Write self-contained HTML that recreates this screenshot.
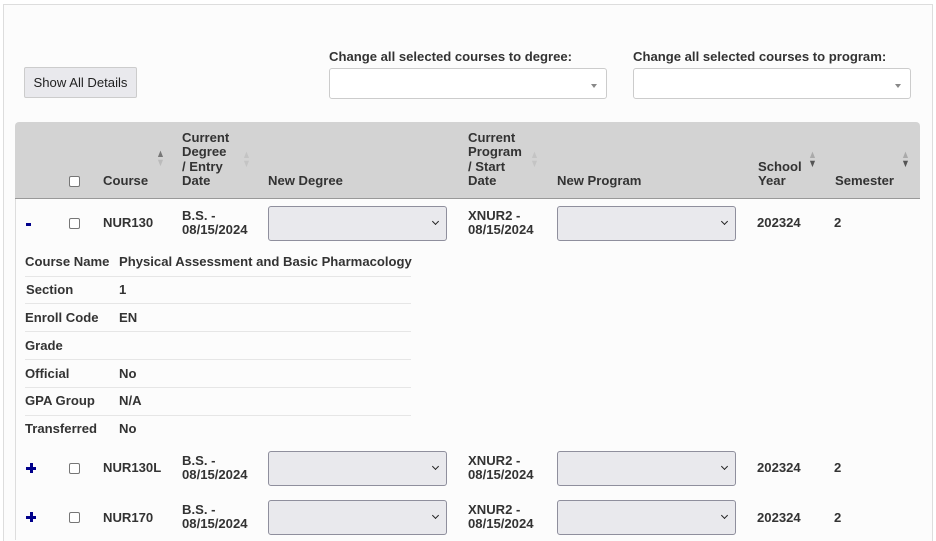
<!DOCTYPE html>
<html><head><style>
html,body{margin:0;background:#fff;width:936px;height:540px;overflow:hidden;font-family:"Liberation Sans",Arial,sans-serif;color:#333;}
.frame{position:absolute;left:3px;top:4px;width:928px;height:536px;border:1px solid #ddd;border-bottom:none;background:#fcfcfc;}
.a{position:absolute;}
.b{font-weight:bold;font-size:13.1px;line-height:14.4px;}
.btn{position:absolute;left:24px;top:67px;width:113px;height:31px;background:#e9e9ed;border:1px solid #ccc;border-radius:2px;font-size:13.1px;line-height:29px;text-align:center;color:#222;box-sizing:border-box;}
.sel2{position:absolute;height:31px;background:#fff;border:1px solid #ccc;border-radius:3px;box-sizing:border-box;}
.sel2:after{content:"";position:absolute;right:9px;top:15px;border-left:3px solid transparent;border-right:3px solid transparent;border-top:4px solid #888;}
.hdr{position:absolute;left:15px;top:122px;width:905px;height:77px;background:#d3d3d3;border-radius:4px 4px 0 0;border-bottom:1px solid #999;box-sizing:border-box;}
.vl{position:absolute;left:15px;top:199px;width:1px;height:341px;background:#ddd;}
.cb{position:absolute;width:11px;height:11px;border:1px solid #767676;border-radius:2px;background:#fff;box-sizing:border-box;}
.sel{position:absolute;width:179px;height:35px;background:#e9e9ed;border:1px solid #8f8f9d;border-radius:3px;box-sizing:border-box;}
.sel:after{content:"";position:absolute;right:8px;top:12px;width:4px;height:4px;border-right:1.5px solid #222;border-bottom:1.5px solid #222;transform:rotate(45deg);}
.dl{position:absolute;left:25px;width:386px;height:28px;border-top:1px solid #e6e6e6;}
.arr{position:absolute;font-size:11px;line-height:9px;color:#aaa;transform:scaleX(0.8);}
.plus{position:absolute;left:26px;width:10px;height:10px;}
.plus:before{content:"";position:absolute;left:0;top:4px;width:10px;height:2.5px;background:#00008b;}
.plus:after{content:"";position:absolute;left:4px;top:0;width:2.5px;height:10px;background:#00008b;}
</style></head><body>
<div class="frame"></div>
<div class="btn">Show All Details</div>
<div class="a b" style="left:329px;top:50px">Change all selected courses to degree:</div>
<div class="a b" style="left:633px;top:50px">Change all selected courses to program:</div>
<div class="sel2" style="left:329px;top:68px;width:278px"></div>
<div class="sel2" style="left:633px;top:68px;width:278px"></div>
<div class="hdr"></div>
<div class="vl"></div>
<div class="cb" style="left:69px;top:176px"></div>
<div class="a b" style="left:103px;top:174px">Course</div>
<div class="arr" style="left:155px;top:150px;color:#777">▲<br><span style="color:#bbb">▼</span></div>
<div class="a b" style="left:182px;top:131px">Current<br>Degree<br>/ Entry<br>Date</div>
<div class="arr" style="left:241px;top:151px;color:#c4c4c4">▲<br>▼</div>
<div class="a b" style="left:268px;top:174px">New Degree</div>
<div class="a b" style="left:468px;top:131px">Current<br>Program<br>/ Start<br>Date</div>
<div class="arr" style="left:529px;top:151px;color:#c4c4c4">▲<br>▼</div>
<div class="a b" style="left:557px;top:174px">New Program</div>
<div class="a b" style="left:758px;top:160px">School<br>Year</div>
<div class="arr" style="left:807px;top:151px;color:#aaa">▲<br><span style="color:#555">▼</span></div>
<div class="a b" style="left:835px;top:174px">Semester</div>
<div class="arr" style="left:900px;top:151px;color:#aaa">▲<br><span style="color:#555">▼</span></div>

<div class="a" style="left:26px;top:223px;width:5px;height:3px;background:#00008b"></div>
<div class="cb" style="left:69px;top:218px"></div>
<div class="a b" style="left:103px;top:216px">NUR130</div>
<div class="a b" style="left:182px;top:209px">B.S. -<br>08/15/2024</div>
<div class="sel" style="left:268px;top:206px"></div>
<div class="a b" style="left:468px;top:209px">XNUR2 -<br>08/15/2024</div>
<div class="sel" style="left:557px;top:206px"></div>
<div class="a b" style="left:757px;top:216px">202324</div>
<div class="a b" style="left:834px;top:216px">2</div>

<div class="a b" style="left:25px;top:255px">Course Name</div><div class="a b" style="left:119px;top:255px">Physical Assessment and Basic Pharmacology</div>
<div class="dl" style="top:276px"></div>
<div class="a b" style="left:26px;top:283px">Section</div><div class="a b" style="left:119px;top:283px">1</div>
<div class="dl" style="top:303px"></div>
<div class="a b" style="left:25px;top:311px">Enroll Code</div><div class="a b" style="left:119px;top:311px">EN</div>
<div class="dl" style="top:331px"></div>
<div class="a b" style="left:25px;top:339px">Grade</div>
<div class="dl" style="top:359px"></div>
<div class="a b" style="left:25px;top:367px">Official</div><div class="a b" style="left:119px;top:367px">No</div>
<div class="dl" style="top:387px"></div>
<div class="a b" style="left:25px;top:394px">GPA Group</div><div class="a b" style="left:119px;top:394px">N/A</div>
<div class="dl" style="top:415px"></div>
<div class="a b" style="left:25px;top:422px">Transferred</div><div class="a b" style="left:119px;top:422px">No</div>

<div class="plus" style="top:463px"></div>
<div class="cb" style="left:69px;top:463px"></div>
<div class="a b" style="left:103px;top:461px">NUR130L</div>
<div class="a b" style="left:182px;top:454px">B.S. -<br>08/15/2024</div>
<div class="sel" style="left:268px;top:451px"></div>
<div class="a b" style="left:468px;top:454px">XNUR2 -<br>08/15/2024</div>
<div class="sel" style="left:557px;top:451px"></div>
<div class="a b" style="left:757px;top:461px">202324</div>
<div class="a b" style="left:834px;top:461px">2</div>

<div class="plus" style="top:512px"></div>
<div class="cb" style="left:69px;top:512px"></div>
<div class="a b" style="left:103px;top:511px">NUR170</div>
<div class="a b" style="left:182px;top:503px">B.S. -<br>08/15/2024</div>
<div class="sel" style="left:268px;top:500px"></div>
<div class="a b" style="left:468px;top:503px">XNUR2 -<br>08/15/2024</div>
<div class="sel" style="left:557px;top:500px"></div>
<div class="a b" style="left:757px;top:511px">202324</div>
<div class="a b" style="left:834px;top:511px">2</div>
</body></html>
